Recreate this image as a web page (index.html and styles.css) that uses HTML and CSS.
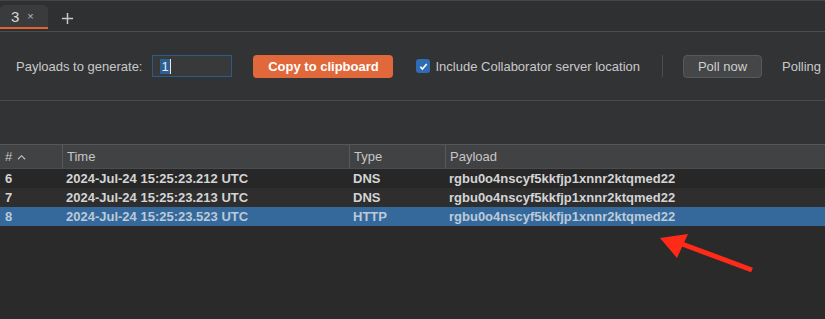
FILE: index.html
```html
<!DOCTYPE html>
<html>
<head>
    <link rel="stylesheet" href="styles.css">
</head>
<body>
    <div class="tab-bar">
        <div class="tab active">
            <span class="tab-label">3</span>
            <span class="tab-close">&times;</span>
        </div>
        <div class="tab-add">
            <svg viewBox="0 0 14 14"><path d="M7 1v12M1 7h12"/></svg>
        </div>
    </div>

    <div class="toolbar">
        <span class="field-label">Payloads to generate:</span>
        <div class="count-input"><span class="selected-text">1</span><span class="caret"></span></div>
        <button class="btn-primary">Copy to clipboard</button>
        <label class="check">
            <span class="check-box">
                <svg viewBox="0 0 12 12"><path d="M2.5 6.3l2.3 2.4 4.7-5.4"/></svg>
            </span>
            Include Collaborator server location
        </label>
        <div class="divider"></div>
        <button class="btn-secondary">Poll now</button>
        <span class="polling">Polling automatically</span>
    </div>

    <div class="empty-panel"></div>

    <div class="table">
        <div class="row header">
            <div class="cell">#<svg class="sort" viewBox="0 0 10 6"><path d="M1 5.5l4-4 4 4"/></svg></div>
            <div class="cell">Time</div>
            <div class="cell">Type</div>
            <div class="cell">Payload</div>
        </div>
        <div class="row odd">
            <div class="cell">6</div>
            <div class="cell">2024-Jul-24 15:25:23.212 UTC</div>
            <div class="cell">DNS</div>
            <div class="cell">rgbu0o4nscyf5kkfjp1xnnr2ktqmed22</div>
        </div>
        <div class="row even">
            <div class="cell">7</div>
            <div class="cell">2024-Jul-24 15:25:23.213 UTC</div>
            <div class="cell">DNS</div>
            <div class="cell">rgbu0o4nscyf5kkfjp1xnnr2ktqmed22</div>
        </div>
        <div class="row selected">
            <div class="cell">8</div>
            <div class="cell">2024-Jul-24 15:25:23.523 UTC</div>
            <div class="cell">HTTP</div>
            <div class="cell">rgbu0o4nscyf5kkfjp1xnnr2ktqmed22</div>
        </div>
    </div>

    <!-- annotation arrow drawn over the table -->
    <svg class="arrow" viewBox="0 0 825 319">
        <path d="M752 270L682 244" stroke="#ff2a17" stroke-width="5"/>
        <path d="M660 238L688 234L677 258z" fill="#ff2a17"/>
    </svg>
</body>
</html>
```

FILE: styles.css
```css
* {
    box-sizing: border-box;
}

body {
    margin: 0;
    width: 825px;
    height: 319px;
    overflow: hidden;
    background: #2a2a2a;
    font-family: 'Liberation Sans', Arial, sans-serif;
    font-size: 13px;
    color: #d4d4d4;
    position: relative;
}

.tab-bar {
    height: 32px;
    background: #2f3032;
    border-top: 1px solid #454547;
    border-bottom: 1px solid #4b4c4e;
    display: flex;
    align-items: flex-end;
}

.tab {
    width: 48px;
    height: 24px;
    background: #3a3b3d;
    border-radius: 5px 5px 0 0;
    border-bottom: 2px solid #e0652e;
    display: flex;
    align-items: center;
    padding-left: 11px;
    gap: 8px;
    margin-bottom: 2px;
}

.tab-label {
    font-size: 15px;
    color: #d8d8d8;
}

.tab-close {
    font-size: 11px;
    color: #b8b8b8;
}

.tab-add {
    width: 34px;
    height: 26px;
    display: flex;
    align-items: center;
    justify-content: center;
    margin-left: 2px;
}

.tab-add svg {
    width: 13px;
    height: 13px;
    stroke: #c8c8c8;
    stroke-width: 1.6;
    fill: none;
}

.toolbar {
    height: 69px;
    background: #323335;
    border-bottom: 1px solid #4a4b4d;
    display: flex;
    align-items: center;
    padding-left: 16px;
    white-space: nowrap;
    overflow: hidden;
}

.toolbar > * {
    flex-shrink: 0;
}

.field-label {
    color: #c9c9c9;
}

.count-input {
    width: 80px;
    height: 22px;
    margin-left: 10px;
    border: 1px solid #2d5a88;
    background: #38393b;
    display: flex;
    align-items: center;
    padding-left: 7px;
}

.selected-text {
    background: #2c5f93;
    color: #e8e8e8;
    padding: 0 1px;
    line-height: 15px;
}

.caret {
    width: 1px;
    height: 15px;
    background: #e8e8e8;
}

.btn-primary {
    margin-left: 21px;
    width: 140px;
    height: 23px;
    border: none;
    border-radius: 4px;
    background: #e0683a;
    color: #ffffff;
    font-family: inherit;
    font-size: 13px;
    font-weight: bold;
}

.check {
    display: flex;
    align-items: center;
    gap: 5px;
    margin-left: 23px;
    color: #c9c9c9;
}

.check-box {
    width: 14px;
    height: 14px;
    border-radius: 3px;
    background: #2f6cb4;
    display: flex;
    align-items: center;
    justify-content: center;
}

.check-box svg {
    width: 11px;
    height: 11px;
    stroke: #ffffff;
    stroke-width: 1.8;
    fill: none;
}

.divider {
    width: 1px;
    height: 22px;
    background: #4c4d4f;
    margin-left: 22px;
}

.btn-secondary {
    margin-left: 20px;
    width: 79px;
    height: 23px;
    border: 1px solid #58595b;
    border-radius: 4px;
    background: #454648;
    color: #cfcfcf;
    font-family: inherit;
    font-size: 13px;
}

.polling {
    margin-left: 20px;
    color: #c9c9c9;
}

.empty-panel {
    height: 44px;
    background: #323335;
    border-bottom: 1px solid #555658;
}

.row {
    display: grid;
    grid-template-columns: 62px 287px 96px 1fr;
    height: 19px;
    align-items: center;
}

.row .cell {
    padding-left: 4px;
    font-weight: bold;
    font-size: 13px;
    white-space: nowrap;
}

.row .cell:first-child {
    padding-left: 5px;
}

.header {
    height: 24px;
    background: #414244;
    border-bottom: 1px solid #4c4c4e;
    align-items: stretch;
}

.header .cell {
    font-weight: normal;
    font-size: 13px;
    color: #c6c6c6;
    display: flex;
    align-items: center;
    padding-left: 4px;
}

.header .cell + .cell {
    border-left: 1px solid #58595b;
}

.sort {
    width: 9px;
    height: 6px;
    margin-left: 5px;
    stroke: #c6c6c6;
    stroke-width: 1.2;
    fill: none;
}

.odd {
    background: #272727;
}

.even {
    background: #2e2e2e;
}

.selected {
    background: #35699b;
    color: #bccad8;
}

.arrow {
    position: absolute;
    left: 0;
    top: 0;
    width: 825px;
    height: 319px;
    pointer-events: none;
}
```
